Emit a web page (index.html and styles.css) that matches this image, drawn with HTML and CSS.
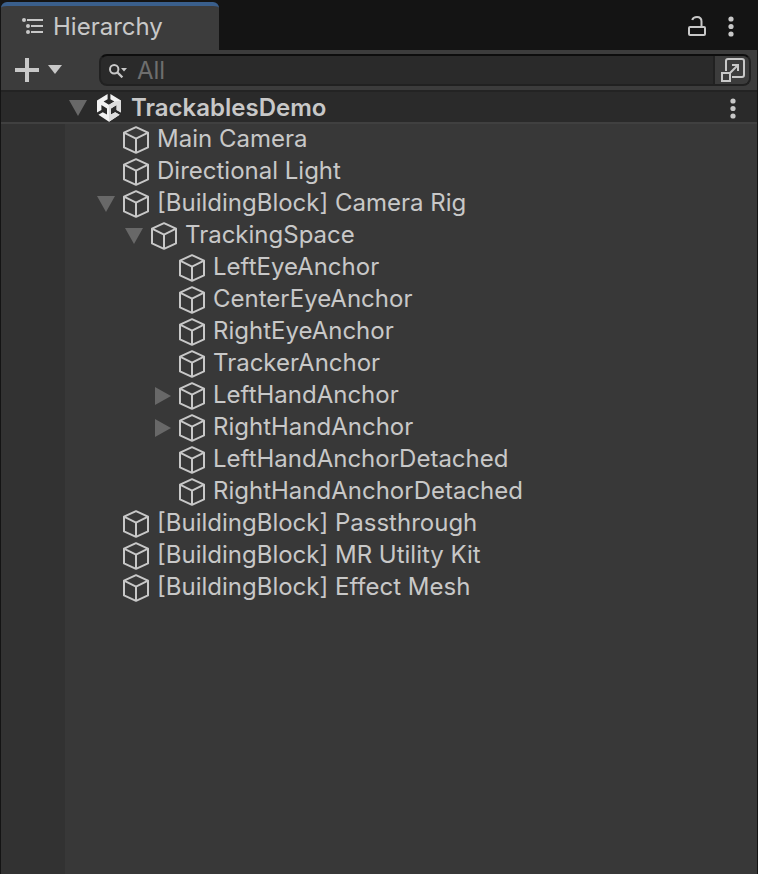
FILE: index.html
```
<!DOCTYPE html>
<html lang="en">
<head>
	<meta charset="UTF-8">
	<meta name="viewport" content="width=device-width, initial-scale=1.0">
	<title>Hierarchy</title>
	<link rel="stylesheet" href="styles.css">
</head>
<body>
	<!-- shared icons -->
	<svg class="defs" width="0" height="0" aria-hidden="true">
		<symbol id="cube" viewBox="0 0 28 28">
			<path d="M14 1.2 26 6.6V21.4L14 26.8 2 21.4V6.6ZM2 6.6 14 12.6 26 6.6M14 12.6V26.8" fill="none" stroke="currentColor" stroke-width="2" stroke-linejoin="round"/>
		</symbol>
		<symbol id="open" viewBox="0 0 18 16">
			<path d="M0 0H18L9 16Z" fill="currentColor"/>
		</symbol>
		<symbol id="closed" viewBox="0 0 18 18">
			<path d="M2 0V18L18 9Z" fill="currentColor"/>
		</symbol>
		<symbol id="dots" viewBox="0 0 6 21">
			<circle cx="3" cy="3" r="2.6" fill="currentColor"/>
			<circle cx="3" cy="10.5" r="2.6" fill="currentColor"/>
			<circle cx="3" cy="18" r="2.6" fill="currentColor"/>
		</symbol>
	</svg>

	<div class="panel">
		<header class="tabbar">
			<button class="tab" type="button">
				<svg width="22" height="18" viewBox="0 0 22 18" aria-hidden="true">
					<g fill="currentColor">
						<circle cx="2" cy="2" r="2"/>
						<circle cx="6" cy="8" r="2"/>
						<circle cx="6" cy="14" r="2"/>
						<path d="M5 1H21V3H5ZM9 7H21V9H9ZM9 13H21V15H9Z"/>
					</g>
				</svg>
				<span>Hierarchy</span>
			</button>
			<div class="tabbar-actions">
				<button type="button" aria-label="Lock">
					<svg width="18" height="22" viewBox="0 0 18 22" aria-hidden="true">
						<path d="M2 12H16Q17 12 17 13V19Q17 20 16 20H2Q1 20 1 19V13Q1 12 2 12ZM13.5 12V6.5Q13.5 2 9 2Q5.2 2 4.2 5" fill="none" stroke="currentColor" stroke-width="2"/>
					</svg>
				</button>
				<button type="button" aria-label="Tab menu"><svg width="6" height="21"><use href="#dots"/></svg></button>
			</div>
		</header>

		<div class="toolbar">
			<button class="add" type="button" aria-label="Create">
				<svg width="24" height="24" viewBox="0 0 24 24" aria-hidden="true"><path d="M10 0H14V10H24V14H14V24H10V14H0V10H10Z" fill="currentColor"/></svg>
				<svg width="14" height="10" viewBox="0 0 14 10" aria-hidden="true"><path d="M0 0H14L7 9Z" fill="currentColor"/></svg>
			</button>
			<div class="search">
				<label class="search-field">
					<svg width="18" height="14" viewBox="0 0 18 14" aria-hidden="true">
						<circle cx="5.2" cy="5.2" r="4.2" fill="none" stroke="currentColor" stroke-width="2"/>
						<path d="M8 8 13.4 13.4" fill="none" stroke="currentColor" stroke-width="2.2"/>
						<path d="M12 4H18L15 7.5Z" fill="currentColor"/>
					</svg>
					<input type="text" placeholder="All" aria-label="Search">
				</label>
				<button class="search-open" type="button" aria-label="Open in Search">
					<svg width="26" height="26" viewBox="0 0 26 26" aria-hidden="true">
						<g fill="none" stroke="currentColor" stroke-width="2">
							<path d="M6 14V4Q6 2 8 2H22Q24 2 24 4V18Q24 20 22 20H12"/>
							<path d="M2 16H10V24H2Z"/>
							<path d="M9 17 18 8M12 8H18V14"/>
						</g>
					</svg>
				</button>
			</div>
		</div>

		<div class="scene">
			<button class="foldout" type="button" aria-label="Collapse"><svg width="18" height="16"><use href="#open"/></svg></button>
			<svg class="icon" viewBox="0 0 28 28" aria-hidden="true">
				<path d="M12.6 0V5.2L8.6 7.6 14 10.8 19.4 7.6 15.4 5.2V0L26 6.4V18.6L21.6 16V11L16 14.4V20.6L20.2 18.2 24.6 20.8 14 27.8 3.4 20.8 7.8 18.2 12 20.6V14.4L6.4 11V16L2 18.6V6.4Z" fill="#f2f2f2"/>
				<path d="M14 10.8 19.4 7.6 26 6.4V18.6L21.6 16V11L16 14.4V20.6L20.2 18.2 24.6 20.8 14 27.8Z" fill="#dcdcdc"/>
			</svg>
			<span class="scene-name">TrackablesDemo</span>
			<button class="scene-menu" type="button" aria-label="Scene menu"><svg width="6" height="21"><use href="#dots"/></svg></button>
		</div>

		<div class="tree">
			<ul>
				<li><div class="row"><svg class="icon"><use href="#cube"/></svg><span>Main Camera</span></div></li>
				<li><div class="row"><svg class="icon"><use href="#cube"/></svg><span>Directional Light</span></div></li>
				<li>
					<div class="row"><button class="foldout" type="button" aria-label="Collapse"><svg width="18" height="16"><use href="#open"/></svg></button><svg class="icon"><use href="#cube"/></svg><span>[BuildingBlock] Camera Rig</span></div>
					<ul>
						<li>
							<div class="row"><button class="foldout" type="button" aria-label="Collapse"><svg width="18" height="16"><use href="#open"/></svg></button><svg class="icon"><use href="#cube"/></svg><span>TrackingSpace</span></div>
							<ul>
								<li><div class="row"><svg class="icon"><use href="#cube"/></svg><span>LeftEyeAnchor</span></div></li>
								<li><div class="row"><svg class="icon"><use href="#cube"/></svg><span>CenterEyeAnchor</span></div></li>
								<li><div class="row"><svg class="icon"><use href="#cube"/></svg><span>RightEyeAnchor</span></div></li>
								<li><div class="row"><svg class="icon"><use href="#cube"/></svg><span>TrackerAnchor</span></div></li>
								<li><div class="row"><button class="foldout" type="button" aria-label="Expand"><svg width="18" height="18"><use href="#closed"/></svg></button><svg class="icon"><use href="#cube"/></svg><span>LeftHandAnchor</span></div></li>
								<li><div class="row"><button class="foldout" type="button" aria-label="Expand"><svg width="18" height="18"><use href="#closed"/></svg></button><svg class="icon"><use href="#cube"/></svg><span>RightHandAnchor</span></div></li>
								<li><div class="row"><svg class="icon"><use href="#cube"/></svg><span>LeftHandAnchorDetached</span></div></li>
								<li><div class="row"><svg class="icon"><use href="#cube"/></svg><span>RightHandAnchorDetached</span></div></li>
							</ul>
						</li>
					</ul>
				</li>
				<li><div class="row"><svg class="icon"><use href="#cube"/></svg><span>[BuildingBlock] Passthrough</span></div></li>
				<li><div class="row"><svg class="icon"><use href="#cube"/></svg><span>[BuildingBlock] MR Utility Kit</span></div></li>
				<li><div class="row"><svg class="icon"><use href="#cube"/></svg><span>[BuildingBlock] Effect Mesh</span></div></li>
			</ul>
		</div>
	</div>
</body>
</html>
```
FILE: styles.css
```
* {
  box-sizing: border-box;
}

body {
  margin: 0;
  background: #141414;
  color: #c8c8c8;
  font-family: Inter, sans-serif;
  font-size: 24px;
  line-height: 30px;
}

button {
  display: flex;
  align-items: center;
  padding: 0;
  border: 0;
  background: none;
  color: inherit;
  font: inherit;
  cursor: pointer;
}

svg {
  display: block;
  flex: none;
}

.defs {
  position: absolute;
}

.panel {
  display: flex;
  flex-direction: column;
  min-height: 100vh;
  padding: 0 1px;
}

/* tab bar */
.tabbar {
  display: flex;
  justify-content: space-between;
  height: 50px;
  padding-top: 2px;
}

.tab {
  gap: 9px;
  width: 218px;
  padding: 0 0 2px 21px;
  border-top: 4px solid #3a5f8c;
  border-radius: 6px 6px 0 0;
  background: #3c3c3c;
}

.tabbar-actions {
  display: flex;
  gap: 22px;
  padding-right: 23px;
}

/* toolbar */
.toolbar {
  display: flex;
  align-items: center;
  gap: 37px;
  height: 40px;
  padding: 0 6px 0 14px;
  background: #3c3c3c;
}

.add {
  gap: 9px;
}

.search {
  display: flex;
  flex: 1;
  height: 32px;
  border: 2px solid #212121;
  border-top-color: #0d0d0d;
  border-radius: 8px;
  background: #2a2a2a;
  overflow: hidden;
}

.search-field {
  display: flex;
  flex: 1;
  align-items: center;
  gap: 10px;
  padding: 2px 0 0 8px;
}

.search-field input {
  flex: 1;
  min-width: 0;
  padding: 0;
  border: 0;
  outline: 0;
  background: none;
  color: #c8c8c8;
  font: inherit;
}
.search-field input::placeholder {
  color: #6e6e6e;
  opacity: 1;
}

.search-open {
  width: 36px;
  padding-left: 5px;
  border-left: 2px solid #212121;
  background: #3c3c3c;
}

/* scene header */
.scene {
  display: flex;
  align-items: center;
  height: 34px;
  padding: 2px 21px 0 63px;
  border-top: 2px solid #232323;
  border-bottom: 2px solid #404040;
  background: #2a2a2a;
}

.scene-name {
  flex: 1;
  padding-left: 8px;
  font-weight: 600;
}

.foldout {
  justify-content: center;
  width: 28px;
  height: 28px;
  color: #686868;
}

.icon {
  width: 28px;
  height: 28px;
}

.scene .icon {
  margin-left: 3px;
}

/* object tree, the border is the visibility gutter */
.tree {
  flex: 1;
  padding-left: 26px;
  border-left: 64px solid #323232;
  background: #383838;
}

.tree ul {
  margin: 0;
  padding: 0;
  list-style: none;
}
.tree ul ul {
  padding-left: 28px;
}

.row {
  display: flex;
  align-items: center;
  height: 32px;
  padding-left: 31px;
  white-space: nowrap;
}
.row .foldout {
  margin-left: -30px;
  margin-right: 2px;
}
.row span {
  padding: 0 0 2px 7px;
}
```
